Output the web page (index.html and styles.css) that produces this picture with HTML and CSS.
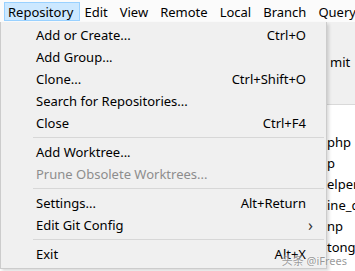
FILE: index.html
```html
<!DOCTYPE html>
<html lang="en">
<head>
    <meta charset="UTF-8">
    <meta name="viewport" content="width=device-width, initial-scale=1.0">
    <title>Repository menu</title>
    <link rel="stylesheet" href="styles.css">
</head>
<body>
    <nav class="menubar">
        <div class="menubar-item active">Repository</div>
        <div class="menubar-item">Edit</div>
        <div class="menubar-item">View</div>
        <div class="menubar-item">Remote</div>
        <div class="menubar-item">Local</div>
        <div class="menubar-item">Branch</div>
        <div class="menubar-item">Query</div>
    </nav>
    <main class="app">
        <div class="toolbar">
            <span class="toolbar-label">mit</span>
        </div>
        <ul class="file-list">
            <li></li>
            <li>php</li>
            <li>p</li>
            <li>elper</li>
            <li>ine_d</li>
            <li>np</li>
            <li>tong.</li>
        </ul>

        <!-- dropdown of the Repository menu -->
        <div class="dropdown">
            <div class="item"><span>Add or Create...</span><span class="key">Ctrl+O</span></div>
            <div class="item"><span>Add Group...</span></div>
            <div class="item"><span>Clone...</span><span class="key">Ctrl+Shift+O</span></div>
            <div class="item"><span>Search for Repositories...</span></div>
            <div class="item"><span>Close</span><span class="key">Ctrl+F4</span></div>
            <div class="separator"></div>
            <div class="item"><span>Add Worktree...</span></div>
            <div class="item disabled"><span>Prune Obsolete Worktrees...</span></div>
            <div class="separator"></div>
            <div class="item"><span>Settings...</span><span class="key">Alt+Return</span></div>
            <div class="item"><span>Edit Git Config</span><span class="arrow">&#x203A;</span></div>
            <div class="separator"></div>
            <div class="item"><span>Exit</span><span class="key">Alt+X</span></div>
        </div>
        <div class="watermark">头条 @iFrees</div>
    </main>
</body>
</html>
```

FILE: styles.css
```css
body {
    margin: 0;
    width: 355px;
    height: 271px;
    overflow: hidden;
    font-family: "Noto Sans", "Noto Sans CJK SC", sans-serif;
    font-size: 13px;
    color: #000;
    background-color: #fff;
}
.menubar {
    display: flex;
    height: 22px;
    padding-left: 4px;
    background-color: #fbfbfb;
    box-sizing: border-box;
}
.menubar-item {
    height: 19px;
    margin-top: 2px;
    padding: 0 7px 0 3px;
    line-height: 18px;
    box-sizing: border-box;
    border: 1px solid transparent;
    white-space: nowrap;
}
.menubar-item.active {
    background-color: #cce8ff;
    border-color: #99d1ff;
    padding-right: 6px;
}
.app {
    position: relative;
    height: 249px;
}
.toolbar {
    height: 83px;
    background-color: #f0f0f0;
    border-bottom: 1px solid #d9d9d9;
    padding-left: 330px;
    box-sizing: border-box;
}
.toolbar-label {
    display: block;
    padding-top: 31px;
    line-height: 18px;
}
.file-list {
    list-style: none;
    margin: 0;
    padding: 6px 0 0 327px;
}
.file-list li {
    height: 21px;
    line-height: 21px;
    white-space: nowrap;
}
.dropdown {
    position: absolute;
    top: 0;
    left: 0;
    width: 327px;
    padding: 2px 0 3px 2px;
    box-sizing: border-box;
    background-color: #f0f0f0;
    border: 1px solid #cccccc;
    border-top: none;
    box-shadow: 2px 2px 3px rgba(0, 0, 0, 0.15);
}
.item {
    display: flex;
    justify-content: space-between;
    align-items: center;
    height: 22px;
    padding: 0 20px 0 33px;
    white-space: nowrap;
}
.item.disabled {
    color: #8d8d8d;
}
.key {
    text-align: right;
}
.arrow {
    font-size: 16px;
    margin-right: -7px;
    color: #333;
}
.separator {
    height: 1px;
    margin: 3px 2px 3px 30px;
    background-color: #d7d7d7;
}
.watermark {
    position: absolute;
    right: 8px;
    bottom: 3px;
    font-size: 11px;
    color: rgba(120, 120, 120, 0.75);
    text-shadow: 0 0 2px #fff;
}
```
